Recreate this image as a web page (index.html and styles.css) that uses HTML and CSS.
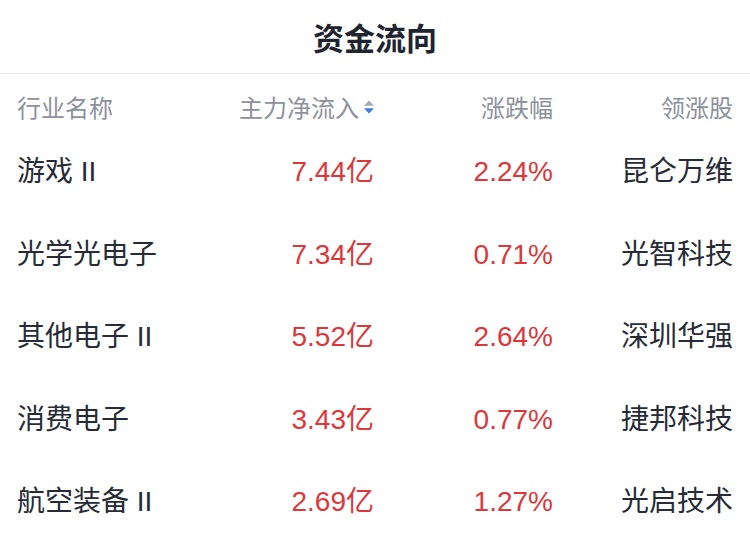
FILE: index.html
```html
<!DOCTYPE html>
<html lang="zh-CN">
<head>
<meta charset="utf-8">
<link rel="stylesheet" href="styles.css">
</head>
<body>
<div class="page">
  <div class="title">资金流向</div>
  <div class="grid head">
    <div class="c1">行业名称</div>
    <div class="c2 sort">主力净流入<svg class="arrow" width="12" height="16" viewBox="0 0 12 16"><path d="M6 1.5 L11 6.8 H1 Z" fill="#a3a8b2"/><path d="M6 14.5 L11 9.2 H1 Z" fill="#3b7de8"/></svg></div>
    <div class="c3">涨跌幅</div>
    <div class="c4">领涨股</div>
  </div>
  <div class="grid row">
    <div class="c1">游戏 II</div>
    <div class="c2 red">7.44亿</div>
    <div class="c3 red">2.24%</div>
    <div class="c4">昆仑万维</div>
  </div>
  <div class="grid row">
    <div class="c1">光学光电子</div>
    <div class="c2 red">7.34亿</div>
    <div class="c3 red">0.71%</div>
    <div class="c4">光智科技</div>
  </div>
  <div class="grid row">
    <div class="c1">其他电子 II</div>
    <div class="c2 red">5.52亿</div>
    <div class="c3 red">2.64%</div>
    <div class="c4">深圳华强</div>
  </div>
  <div class="grid row">
    <div class="c1">消费电子</div>
    <div class="c2 red">3.43亿</div>
    <div class="c3 red">0.77%</div>
    <div class="c4">捷邦科技</div>
  </div>
  <div class="grid row">
    <div class="c1">航空装备 II</div>
    <div class="c2 red">2.69亿</div>
    <div class="c3 red">1.27%</div>
    <div class="c4">光启技术</div>
  </div>
</div>
</body>
</html>
```
FILE: styles.css
```css
html, body {
  margin: 0;
  padding: 0;
  background: #ffffff;
}
body {
  font-family: "Liberation Sans", "Noto Sans CJK SC", sans-serif;
  color: #262b36;
}
.page {
  width: 750px;
}
.title {
  height: 73px;
  line-height: 73px;
  text-align: center;
  font-family: "Noto Sans CJK SC", sans-serif;
  font-size: 31px;
  font-weight: 700;
  color: #1f2430;
  border-bottom: 1px solid #e9e9ec;
}
.grid {
  display: grid;
  grid-template-columns: 183px 174px 179px 180px;
  padding: 0 17px;
  align-items: center;
}
.c1 { text-align: left; }
.c2, .c3, .c4 { text-align: right; }
.head {
  height: 57px;
  align-items: start;
  padding-top: 19px;
  box-sizing: border-box;
  font-size: 24px;
  line-height: 28px;
  color: #8c919c;
  font-family: "Noto Sans CJK SC", sans-serif;
}
.sort {
  display: flex;
  justify-content: flex-end;
  align-items: center;
  gap: 4px;
}
.arrow {
  display: block;
  flex-shrink: 0;
  margin-right: -1px;
}
.row {
  height: 82.5px;
  font-size: 28px;
  line-height: 34px;
}
.red { color: #dc383c; }
```
